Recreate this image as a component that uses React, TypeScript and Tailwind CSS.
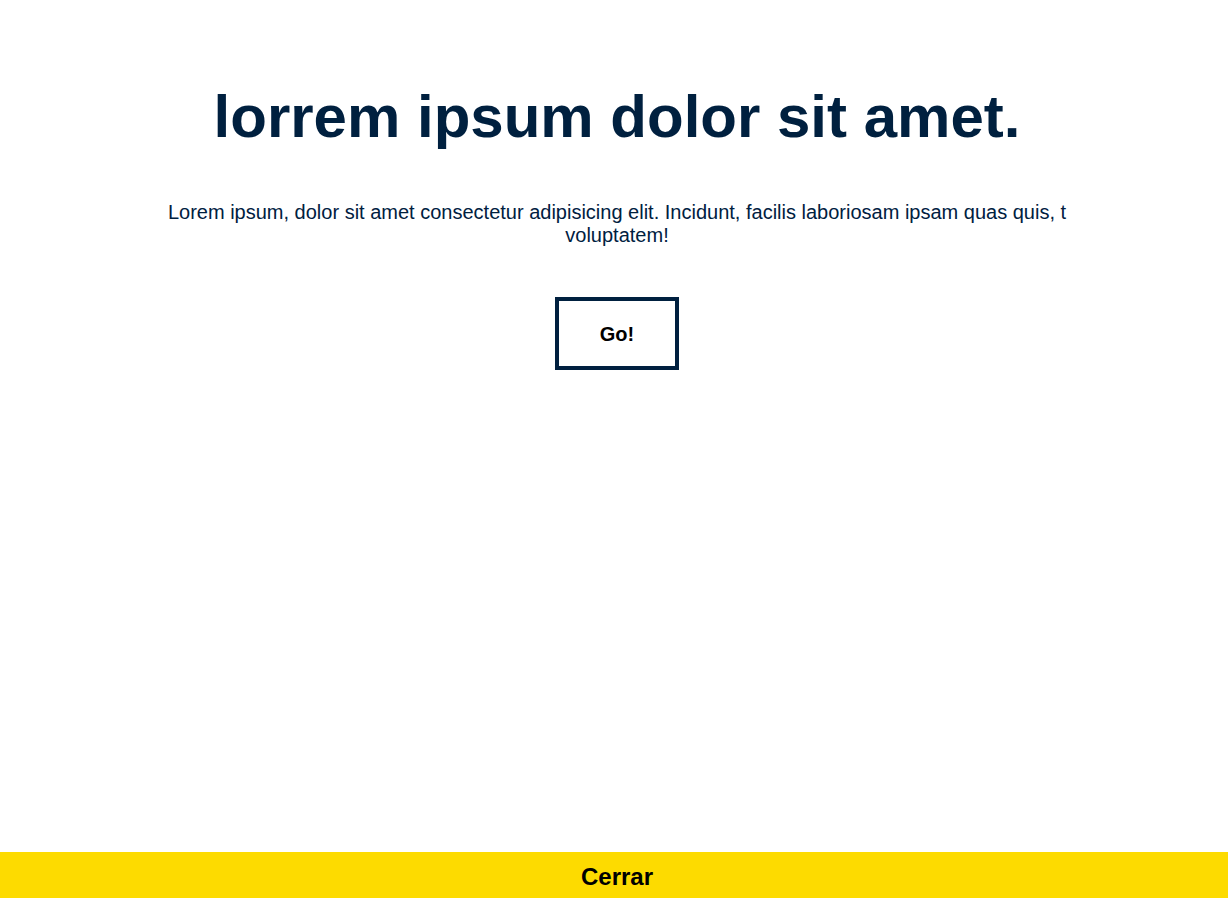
export default function App() {
  return (
    <div
      className="min-h-screen bg-white pl-[6px] text-center"
      style={{ fontFamily: '"Liberation Sans", Arial, sans-serif' }}
    >
      <main className="flex flex-col items-center pt-[82px]">
        <h1 className="text-[60px] font-bold leading-[69px] text-[#00203f]">
          lorrem ipsum dolor sit amet.
        </h1>
        <p className="mt-[50px] w-[910px] text-[20px] leading-[23px] text-[#00203f]">
          Lorem ipsum, dolor sit amet consectetur adipisicing elit. Incidunt, facilis laboriosam ipsam quas quis, t voluptatem!
        </p>
        <button
          type="button"
          className="mt-[50px] h-[73px] w-[124px] border-4 border-[#00203f] bg-white text-[20px] font-bold text-black"
        >
          Go!
        </button>
      </main>

      <button
        type="button"
        className="fixed bottom-0 left-0 h-[46px] w-full bg-[#fddb00] pl-[6px] pt-[4px] text-[24px] font-bold text-black"
      >
        Cerrar
      </button>
    </div>
  );
}
